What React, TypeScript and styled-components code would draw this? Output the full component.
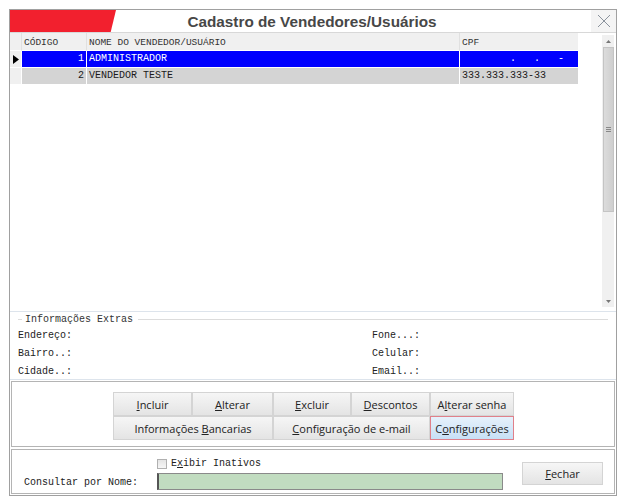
import React from "react";
import styled, { createGlobalStyle } from "styled-components";

const Global = createGlobalStyle`
  html, body { margin: 0; padding: 0; background: #ffffff; }
  body { font-family: "Liberation Mono", monospace; }
  * { box-sizing: border-box; }
`;

const Page = styled.div`
  padding: 9px 0 0 9px;
`;

const Window = styled.div`
  width: 608px;
  height: 487px;
  border: 1px solid #a0a0a0;
  background: #ffffff;
  display: flex;
  flex-direction: column;
`;

const TitleBar = styled.div`
  height: 23px;
  display: flex;
  align-items: stretch;
  border-bottom: 1px solid #d8d8d8;
`;

const RedTab = styled.div`
  width: 106px;
  background: #f2202e;
  clip-path: polygon(0 0, 100% 0, 95% 100%, 0 100%);
`;

const Title = styled.div`
  flex: 1;
  text-align: center;
  font-family: "Liberation Sans", Arial, sans-serif;
  font-weight: bold;
  font-size: 15.3px;
  line-height: 24px;
  color: #474747;
  padding-right: 83px;
`;

const CloseBtn = styled.div`
  width: 25px;
  background: #f4f4f4;
  display: flex;
  align-items: center;
  justify-content: center;
`;

const GridArea = styled.div`
  height: 280px;
  display: flex;
  border-bottom: 1px solid #dde4ec;
`;

const GridTable = styled.div`
  flex: 1;
  display: flex;
  flex-direction: column;
`;

const Row = styled.div<{ $h?: number; $color?: string }>`
  display: grid;
  grid-template-columns: 11px 65px 373px 119px;
  height: ${(p) => p.$h || 17}px;
  font-size: 10px;
  line-height: 16px;
  color: ${(p) => p.$color || "#1a1a1a"};
`;

const Cell = styled.div<{ $bg?: string; $right?: boolean; $first?: boolean }>`
  background: ${(p) => p.$bg || "transparent"};
  text-align: ${(p) => (p.$right ? "right" : "left")};
  padding: 0 2px;
  border-left: ${(p) => (p.$first ? "none" : "1px solid #ffffff")};
  border-bottom: 1px solid #ffffff;
  white-space: pre;
  overflow: hidden;
`;

const HeadCell = styled(Cell)`
  background: #f0f0f0;
  color: #333;
  font-size: 9.5px;
  padding-top: 2px;
  border-left: ${(p) => (p.$first ? "none" : "1px solid #e0e0e0")};
  border-bottom: 1px solid #ffffff;
`;

const Indicator = styled.div<{ $bg: string }>`
  background: ${(p) => p.$bg};
  border-bottom: 1px solid #ffffff;
  display: flex;
  align-items: center;
  justify-content: center;
`;

const Scrollbar = styled.div`
  width: 12px;
  margin: 2px 2px 0 0;
  background: #f0f0f0;
  display: flex;
  flex-direction: column;
  align-items: center;
  height: 272px;
`;

const Arrow = styled.div`
  height: 12px;
  display: flex;
  align-items: center;
  justify-content: center;
`;

const Thumb = styled.div`
  width: 11px;
  height: 165px;
  background: linear-gradient(to right, #dcdcdc, #cfcfcf);
  border: 1px solid #c4c4c4;
  display: flex;
  align-items: center;
  justify-content: center;
`;

const Spacer = styled.div`
  flex: 1;
`;

const InfoGroup = styled.div`
  height: 68px;
  padding: 1px 8px 0 8px;
  border-bottom: 1px solid #dde4ec;
`;

const Legend = styled.div`
  display: flex;
  align-items: center;
  font-size: 10px;
  color: #333;
  height: 13px;
  &::before {
    content: "";
    width: 4px;
    border-top: 1px solid #dcdcdc;
    margin-right: 3px;
  }
  &::after {
    content: "";
    flex: 1;
    border-top: 1px solid #dcdcdc;
    margin-left: 5px;
  }
`;

const InfoGrid = styled.div`
  display: grid;
  grid-template-columns: 354px 1fr;
  grid-auto-rows: 18px;
  font-size: 10px;
  color: #222;
  line-height: 18px;
  margin-top: 1px;
`;

const ButtonsPanel = styled.div`
  margin: 1px 1px 0 1px;
  height: 66px;
  border: 1px solid #b4b4b4;
  padding: 10px 0 0 101px;
`;

const BtnGrid = styled.div`
  display: grid;
  grid-template-columns: 79px 81px 78px 79px 84px;
  grid-auto-rows: 24px;
`;

const Btn = styled.div<{ $span?: number; $focus?: boolean }>`
  grid-column: span ${(p) => p.$span || 1};
  font-family: "Open Sans", "Noto Sans", sans-serif;
  font-size: 11px;
  color: #222;
  display: flex;
  align-items: center;
  justify-content: center;
  border: 1px solid ${(p) => (p.$focus ? "#e0808a" : "#d4d4d4")};
  background: ${(p) =>
    p.$focus
      ? "linear-gradient(#e6f1fb, #c7e0f6)"
      : "linear-gradient(#f6f6f6, #e4e4e4)"};
  u { text-decoration: underline; }
`;

const BottomPanel = styled.div`
  margin: 2px 1px 1px 1px;
  flex: 1;
  border: 1px solid #b4b4b4;
  display: grid;
  grid-template-columns: 145px 346px 1fr;
  grid-template-rows: 19px 20px;
  padding-top: 4px;
`;

const CheckRow = styled.div`
  grid-column: 2;
  display: flex;
  align-items: center;
  gap: 4px;
  font-size: 10px;
  color: #222;
`;

const Box = styled.span`
  width: 10px;
  height: 10px;
  border: 1px solid #b0b0b0;
  background: linear-gradient(#e4e4e4, #f6f6f6);
`;

const SearchLabel = styled.div`
  grid-column: 1;
  grid-row: 2;
  font-size: 10px;
  color: #222;
  padding-left: 12px;
  padding-top: 4px;
`;

const SearchInput = styled.div`
  grid-column: 2;
  grid-row: 2;
  height: 17px;
  margin-top: 0;
  background: #c1dcc0;
  border: 1px solid #8a8a8a;
  border-left: 2px solid #555;
`;

const FecharCell = styled.div`
  grid-column: 3;
  grid-row: 1 / span 2;
  padding: 8px 0 0 19px;
`;

const FecharBtn = styled(Btn)`
  width: 81px;
  height: 23px;
`;

export default function App() {
  const header = ["", "CÓDIGO", "NOME DO VENDEDOR/USUÁRIO", "CPF"];
  return (
    <>
      <Global />
      <Page>
        <Window>
          <TitleBar>
            <RedTab />
            <Title>Cadastro de Vendedores/Usuários</Title>
            <CloseBtn>
              <svg width="16" height="16" viewBox="0 0 16 16">
                <path d="M2 2 L14 14 M14 2 L2 14" stroke="#8a929c" strokeWidth="1" />
              </svg>
            </CloseBtn>
          </TitleBar>
          <GridArea>
            <GridTable>
              <Row $h={18}>
                {header.map((h, i) => (
                  <HeadCell key={i} $first={i === 0}>
                    {h}
                  </HeadCell>
                ))}
              </Row>
              <Row $color="#ffffff">
                <Indicator $bg="#f0f0f0">
                  <svg width="6" height="9" viewBox="0 0 6 9">
                    <path d="M0 0 L6 4.5 L0 9 Z" fill="#000" />
                  </svg>
                </Indicator>
                <Cell $bg="#0000ff" $right>1</Cell>
                <Cell $bg="#0000ff">ADMINISTRADOR</Cell>
                <Cell $bg="#0000ff" $right>{"   .   .   -  "}</Cell>
              </Row>
              <Row>
                <Indicator $bg="#f0f0f0" />
                <Cell $bg="#d4d4d4" $right>2</Cell>
                <Cell $bg="#d4d4d4">VENDEDOR TESTE</Cell>
                <Cell $bg="#d4d4d4">333.333.333-33</Cell>
              </Row>
            </GridTable>
            <Scrollbar>
              <Arrow>
                <svg width="5" height="3" viewBox="0 0 5 3"><path d="M0 3 L2.5 0 L5 3 Z" fill="#777" /></svg>
              </Arrow>
              <Thumb>
                <svg width="5" height="6" viewBox="0 0 5 6"><path d="M0 0.5 H5 M0 2.5 H5 M0 4.5 H5" stroke="#888" strokeWidth="1" /></svg>
              </Thumb>
              <Spacer />
              <Arrow>
                <svg width="5" height="3" viewBox="0 0 5 3"><path d="M0 0 L2.5 3 L5 0 Z" fill="#777" /></svg>
              </Arrow>
            </Scrollbar>
          </GridArea>
          <InfoGroup>
            <Legend>Informações Extras</Legend>
            <InfoGrid>
              <div>Endereço:</div>
              <div>Fone...:</div>
              <div>Bairro..:</div>
              <div>Celular:</div>
              <div>Cidade..:</div>
              <div>Email..:</div>
            </InfoGrid>
          </InfoGroup>
          <ButtonsPanel>
            <BtnGrid>
              <Btn><span><u>I</u>ncluir</span></Btn>
              <Btn><span><u>A</u>lterar</span></Btn>
              <Btn><span><u>E</u>xcluir</span></Btn>
              <Btn><span><u>D</u>escontos</span></Btn>
              <Btn><span>A<u>l</u>terar senha</span></Btn>
              <Btn $span={2}><span>Informações <u>B</u>ancarias</span></Btn>
              <Btn $span={2}><span><u>C</u>onfiguração de e-mail</span></Btn>
              <Btn $focus><span>C<u>o</u>nfigurações</span></Btn>
            </BtnGrid>
          </ButtonsPanel>
          <BottomPanel>
            <CheckRow>
              <Box />
              <span>E<u>x</u>ibir Inativos</span>
            </CheckRow>
            <SearchLabel>Consultar por Nome:</SearchLabel>
            <SearchInput />
            <FecharCell>
              <FecharBtn><span><u>F</u>echar</span></FecharBtn>
            </FecharCell>
          </BottomPanel>
        </Window>
      </Page>
    </>
  );
}
